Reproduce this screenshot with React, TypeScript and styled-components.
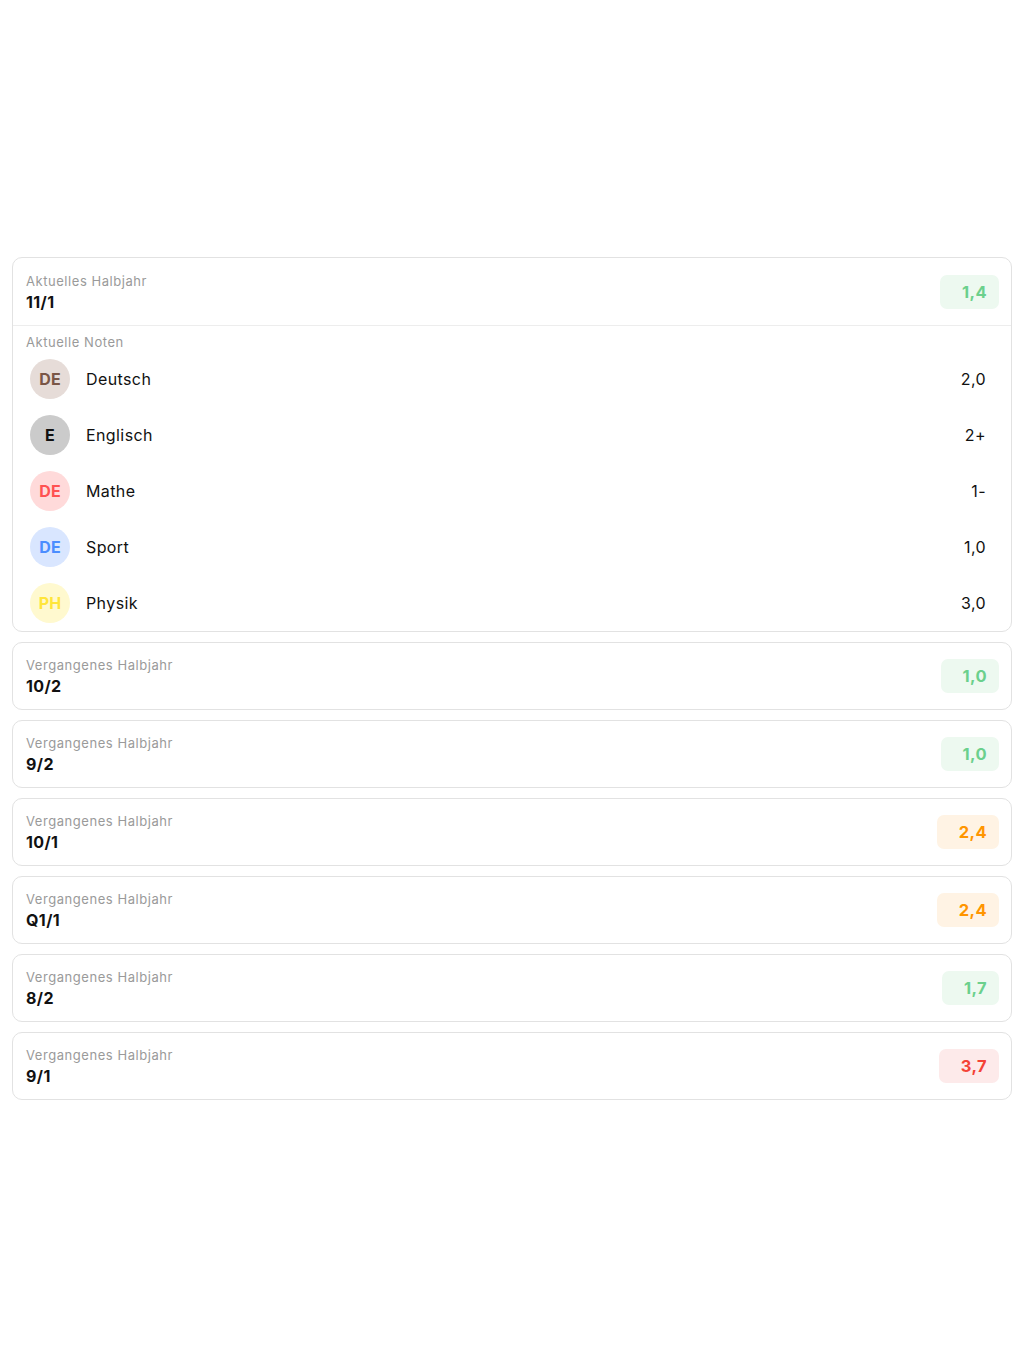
import React from "react";
import styled, { createGlobalStyle } from "styled-components";

const Global = createGlobalStyle`
  html, body { margin: 0; padding: 0; background: #ffffff; }
  body { font-family: Inter, "Noto Sans", "Liberation Sans", sans-serif; color: #111; letter-spacing: 0.4px; }
`;

const Page = styled.div`
  padding: 257px 12px 0 12px;
  display: flex;
  flex-direction: column;
  gap: 10px;
`;

const Card = styled.div`
  border: 1px solid #e2e2e2;
  border-radius: 10px;
  background: #fff;
  overflow: hidden;
`;

const Header = styled.div<{ $tall?: boolean }>`
  height: ${(p) => (p.$tall ? 67 : 66)}px;
  box-sizing: border-box;
  display: flex;
  align-items: center;
  justify-content: space-between;
  padding: 0 12px 0 13px;
`;

const Titles = styled.div`
  display: flex;
  flex-direction: column;
  padding-top: 2px;
`;

const Label = styled.div`
  font-size: 13px;
  line-height: 18px;
  color: #9a9a9a;
  letter-spacing: 0.55px;
`;

const Term = styled.div`
  font-size: 16px;
  line-height: 24px;
  font-weight: 700;
  color: #111;
`;

type Tone = "green" | "orange" | "red";
const toneBg: Record<Tone, string> = { green: "#edf9f0", orange: "#fff3e4", red: "#fdeaea" };
const toneFg: Record<Tone, string> = { green: "#6bd08c", orange: "#ff9500", red: "#f44336" };

const Badge = styled.div<{ $tone: Tone }>`
  height: 34px;
  box-sizing: border-box;
  display: flex;
  align-items: center;
  padding: 0 12px 0 22px;
  border-radius: 7px;
  font-size: 16.5px;
  font-weight: 700;
  background: ${(p) => toneBg[p.$tone]};
  color: ${(p) => toneFg[p.$tone]};
`;

const Section = styled.div`
  border-top: 1px solid #ededed;
  padding: 7px 0 0 13px;
`;

const Row = styled.div`
  height: 56px;
  display: flex;
  align-items: center;
  padding: 0 25px 0 4px;
`;

const Avatar = styled.div<{ $bg: string; $fg: string }>`
  width: 40px;
  height: 40px;
  border-radius: 50%;
  flex: none;
  display: flex;
  align-items: center;
  justify-content: center;
  background: ${(p) => p.$bg};
  color: ${(p) => p.$fg};
  font-size: 16px;
  font-weight: 700;
  letter-spacing: 0.2px;
`;

const Subject = styled.div`
  margin-left: 16px;
  flex: 1;
  font-size: 16px;
  color: #111;
`;

const Grade = styled.div`
  font-size: 16px;
  color: #111;
`;

const subjects = [
  { short: "DE", name: "Deutsch", grade: "2,0", bg: "#e6dcd8", fg: "#7a5646" },
  { short: "E", name: "Englisch", grade: "2+", bg: "#cbcbcb", fg: "#111111" },
  { short: "DE", name: "Mathe", grade: "1-", bg: "#ffdada", fg: "#ff5252" },
  { short: "DE", name: "Sport", grade: "1,0", bg: "#d9e6ff", fg: "#4b8dff" },
  { short: "PH", name: "Physik", grade: "3,0", bg: "#fff9cf", fg: "#ffe53b" },
];

const past: { term: string; avg: string; tone: Tone }[] = [
  { term: "10/2", avg: "1,0", tone: "green" },
  { term: "9/2", avg: "1,0", tone: "green" },
  { term: "10/1", avg: "2,4", tone: "orange" },
  { term: "Q1/1", avg: "2,4", tone: "orange" },
  { term: "8/2", avg: "1,7", tone: "green" },
  { term: "9/1", avg: "3,7", tone: "red" },
];

export default function App() {
  return (
    <>
      <Global />
      <Page>
        <Card>
          <Header $tall>
            <Titles>
              <Label>Aktuelles Halbjahr</Label>
              <Term>11/1</Term>
            </Titles>
            <Badge $tone="green">1,4</Badge>
          </Header>
          <Section>
            <Label>Aktuelle Noten</Label>
            {subjects.map((s) => (
              <Row key={s.name}>
                <Avatar $bg={s.bg} $fg={s.fg}>{s.short}</Avatar>
                <Subject>{s.name}</Subject>
                <Grade>{s.grade}</Grade>
              </Row>
            ))}
          </Section>
        </Card>
        {past.map((p) => (
          <Card key={p.term}>
            <Header>
              <Titles>
                <Label>Vergangenes Halbjahr</Label>
                <Term>{p.term}</Term>
              </Titles>
              <Badge $tone={p.tone}>{p.avg}</Badge>
            </Header>
          </Card>
        ))}
      </Page>
    </>
  );
}
